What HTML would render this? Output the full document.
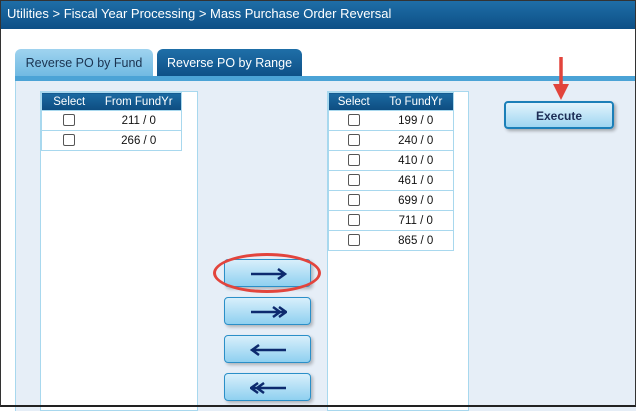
<!DOCTYPE html><html><head><style>
*{margin:0;padding:0;box-sizing:border-box}
body{width:636px;height:407px;overflow:hidden;font-family:"Liberation Sans","DejaVu Sans",sans-serif;background:#fff;position:relative}
.frame{position:absolute;left:0;top:0;width:636px;height:407px;border:1px solid #333;border-bottom:2px solid #222}
.hdr{position:absolute;left:0;top:0;width:636px;height:29px;background:linear-gradient(#1f6fa8,#0d4f86);color:#fff;font-size:13px;padding:6px 0 0 7px}
.tab{position:absolute;top:49px;height:28px;font-size:12.5px;padding:7px 0 0 0;text-align:center;border-radius:6px 6px 0 0}
.strip{position:absolute;left:15px;top:76px;width:621px;height:5px;background:#4ba3d6}
.panel{position:absolute;left:15px;top:81px;width:621px;height:330px;background:#e6eef7;border-left:1px solid #a8d8ee}
.box{position:absolute;background:#fff;border:1px solid #a8d8ee}
table{position:absolute;border-collapse:collapse;font-size:11.5px;border:1px solid #a8d8ee}
th{background:linear-gradient(#1b6aa2,#0d4c80);color:#fff;font-weight:normal;height:18px;font-size:11.5px}
td{height:20px;border:1px solid #a8d8ee;border-left:none;border-right:none;text-align:center;color:#111}
.cb{display:inline-block;width:12px;height:12px;border:1px solid #555;border-radius:2px;vertical-align:middle}
.btn{position:absolute;left:224px;width:87px;height:28px;border:1px solid #2a8fc8;border-radius:4px;background:linear-gradient(#d8effb,#8fd0f0);box-shadow:2px 2px 3px rgba(0,0,0,.25)}
.btn svg{position:absolute;left:25px;top:8px}
</style></head><body>
<div class="hdr">Utilities &gt; Fiscal Year Processing &gt; Mass Purchase Order Reversal</div>
<div class="tab" style="left:15px;width:138px;background:linear-gradient(#9fd3ef,#6fb9e2);color:#1a3350">Reverse PO by Fund</div>
<div class="tab" style="left:157px;width:145px;background:linear-gradient(#1f6fa8,#0d4f86);color:#fff">Reverse PO by Range</div>
<div class="strip"></div>
<div class="panel"></div>
<div class="box" style="left:40px;top:91px;width:158px;height:320px"></div>
<table style="left:41px;top:92px;width:141px"><tr><th style="width:55px">Select</th><th>From FundYr</th></tr>
<tr><td><span class="cb"></span></td><td>211 / 0</td></tr>
<tr><td><span class="cb"></span></td><td>266 / 0</td></tr></table>
<div class="box" style="left:327px;top:91px;width:142px;height:320px"></div>
<table style="left:328px;top:92px;width:126px"><tr><th style="width:50px">Select</th><th>To FundYr</th></tr>
<tr><td><span class="cb"></span></td><td>199 / 0</td></tr>
<tr><td><span class="cb"></span></td><td>240 / 0</td></tr>
<tr><td><span class="cb"></span></td><td>410 / 0</td></tr>
<tr><td><span class="cb"></span></td><td>461 / 0</td></tr>
<tr><td><span class="cb"></span></td><td>699 / 0</td></tr>
<tr><td><span class="cb"></span></td><td>711 / 0</td></tr>
<tr><td><span class="cb"></span></td><td>865 / 0</td></tr></table>
<div class="btn" style="top:259px"><svg width="37" height="12"><path d="M1 6H35M28 1L35 6L28 11" stroke="#0d2a6e" stroke-width="2.5" fill="none"/></svg></div>
<div class="btn" style="top:297px"><svg width="37" height="12"><path d="M1 6H35M23 1L30 6L23 11M29 1L36 6L29 11" stroke="#0d2a6e" stroke-width="2.5" fill="none"/></svg></div>
<div class="btn" style="top:335px"><svg width="37" height="12"><path d="M36 6H2M9 1L2 6L9 11" stroke="#0d2a6e" stroke-width="2.5" fill="none"/></svg></div>
<div class="btn" style="top:373px"><svg width="37" height="12"><path d="M36 6H2M8 1L1 6L8 11M14 1L7 6L14 11" stroke="#0d2a6e" stroke-width="2.5" fill="none"/></svg></div>
<div style="position:absolute;left:213px;top:253px;width:108px;height:40px;border:3px solid #e2443c;border-radius:50%"></div>
<div style="position:absolute;left:504px;top:101px;width:110px;height:28px;border:2px solid #1b7fb8;border-radius:4px;background:linear-gradient(#e2f3fc,#9fd6f1);box-shadow:2px 2px 3px rgba(0,0,0,.3);text-align:center;font-weight:bold;font-size:12px;color:#1d2d55;padding-top:6px">Execute</div>
<svg style="position:absolute;left:551px;top:56px" width="20" height="46"><path d="M10 1V30" stroke="#e2443c" stroke-width="3.5"/><path d="M2 28L18 28L10 44Z" fill="#e2443c"/></svg>
<div class="frame"></div>
</body></html>
